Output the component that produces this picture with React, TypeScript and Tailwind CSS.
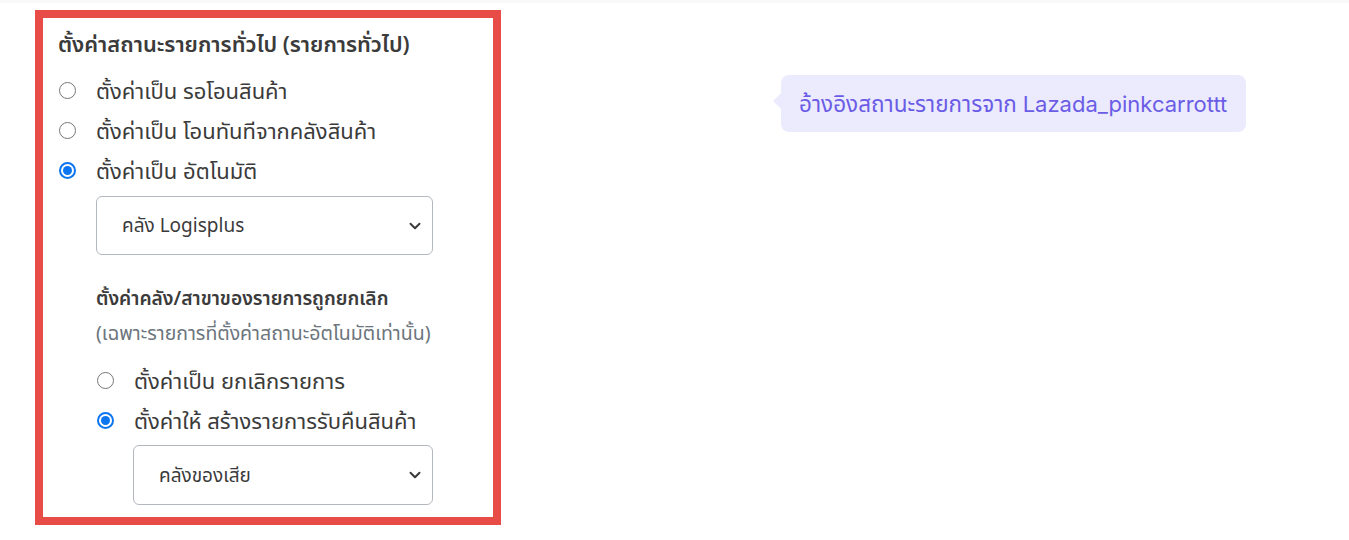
import { ChevronDown } from 'lucide-react';

const font = { fontFamily: '"Noto Sans", "Noto Sans Thai", "Liberation Sans", sans-serif' };

function Radio({ checked, label }: { checked?: boolean; label: string }) {
  return (
    <label className="flex h-10 items-center text-[22px] leading-[40px] text-[#3b3b3b]">
      <span
        className={
          checked
            ? 'ml-[1px] flex h-[17px] w-[17px] shrink-0 items-center justify-center rounded-full border-2 border-[#0b76ef] bg-white'
            : 'ml-[1px] h-[17px] w-[17px] shrink-0 rounded-full border-[1.5px] border-[#767676] bg-white'
        }
      >
        {checked && <span className="h-[9px] w-[9px] rounded-full bg-[#0b76ef]" />}
      </span>
      <span className="ml-[20px]">{label}</span>
    </label>
  );
}

function Select({ value, className }: { value: string; className: string }) {
  return (
    <div
      className={
        'flex items-center justify-between rounded-[6px] border border-[#b3b8bf] bg-white pl-[25px] pr-[8px] text-[19px] text-[#3b3b3b] ' +
        className
      }
    >
      <span>{value}</span>
      <ChevronDown size={18} strokeWidth={2.6} className="text-[#3a3a3a]" />
    </div>
  );
}

export default function App() {
  return (
    <div className="min-h-[540px] w-full bg-white" style={font}>
      <div className="h-[3px] bg-[#f9f9f9]" />
      <div className="flex items-start pl-[35px] pt-[7px]">
        <div className="w-[466px] border-[8px] border-[#e74c47] px-[15px] pb-[12px] pt-[12px]">
          <h3 className="whitespace-nowrap text-[21.8px] font-semibold leading-[27px] text-[#3b3b3b]">
            ตั้งค่าสถานะรายการทั่วไป (รายการทั่วไป)
          </h3>
          <div className="mt-[13px]">
            <Radio label="ตั้งค่าเป็น รอโอนสินค้า" />
            <Radio label="ตั้งค่าเป็น โอนทันทีจากคลังสินค้า" />
            <Radio checked label="ตั้งค่าเป็น อัตโนมัติ" />
          </div>
          <div className="ml-[38px]">
            <Select value="คลัง Logisplus" className="mt-[6px] h-[59px] w-[337px]" />
            <h4 className="mt-[29px] whitespace-nowrap text-[19.2px] font-semibold leading-[27px] text-[#3b3b3b]">
              ตั้งค่าคลัง/สาขาของรายการถูกยกเลิก
            </h4>
            <p className="mt-[10px] whitespace-nowrap text-[19.5px] leading-[24px] text-[#6c757d]">
              (เฉพาะรายการที่ตั้งค่าสถานะอัตโนมัติเท่านั้น)
            </p>
            <div className="mt-[15px]">
              <Radio label="ตั้งค่าเป็น ยกเลิกรายการ" />
              <Radio checked label="ตั้งค่าให้ สร้างรายการรับคืนสินค้า" />
            </div>
            <Select value="คลังของเสีย" className="ml-[37px] mt-[5px] h-[60px] w-[300px]" />
          </div>
        </div>

        <div className="relative ml-[280px] mt-[65px] flex h-[57px] w-[465px] items-center rounded-[8px] bg-[#ecebfe] pl-[18px] text-[22.5px] text-[#6b5ce6]">
          <span className="absolute left-[-8px] top-[18px] h-0 w-0 border-y-[8px] border-r-[8px] border-y-transparent border-r-[#ecebfe]" />
          <span className="whitespace-nowrap">
            อ้างอิงสถานะรายการจาก{' '}
            <span className="font-['Inter',sans-serif] text-[22px]">Lazada_pinkcarrottt</span>
          </span>
        </div>
      </div>
    </div>
  );
}
